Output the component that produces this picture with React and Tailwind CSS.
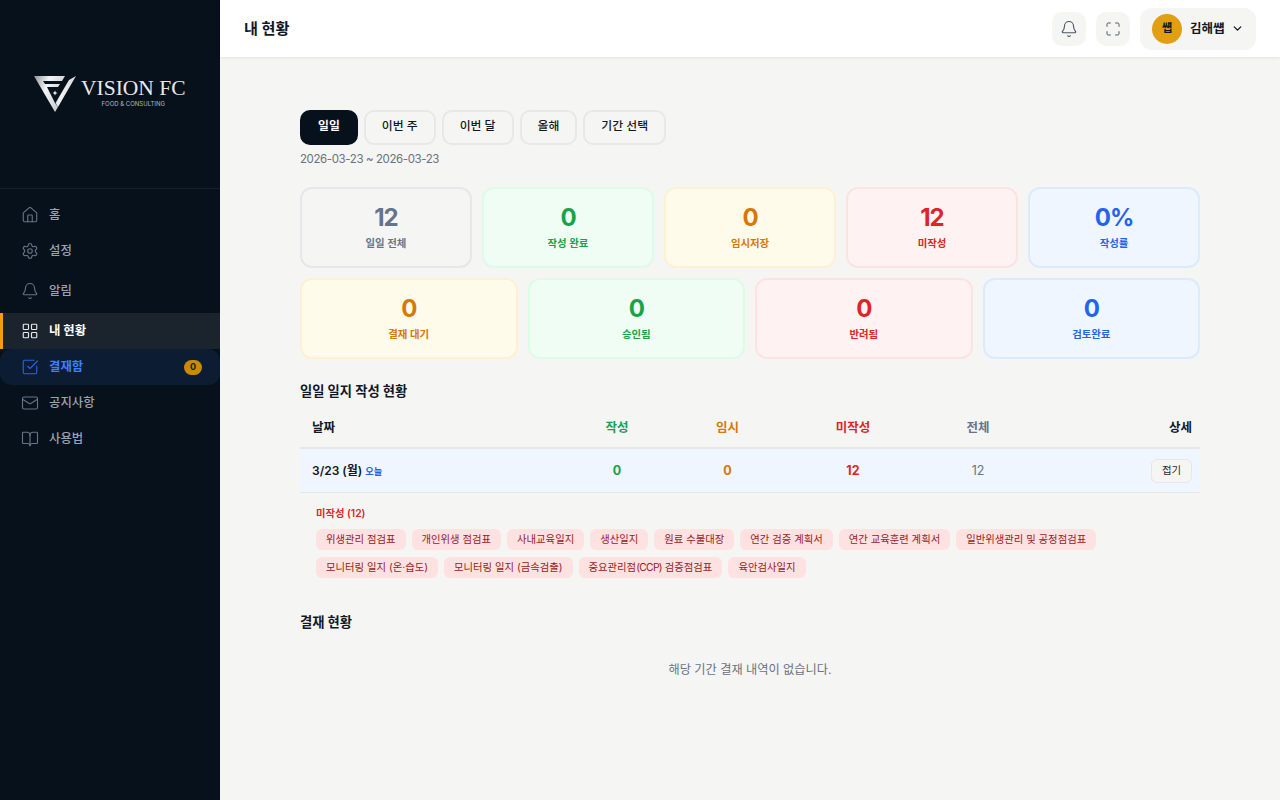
import React from "react";
import { Home, Settings, Bell, LayoutGrid, SquareCheckBig, Mail, BookOpen, Maximize, ChevronDown } from "lucide-react";

const FONT = "font-['Inter','Noto_Sans_CJK_KR',sans-serif]";

function Logo() {
  return (
    <div className="flex items-start">
      <svg width="42" height="38" viewBox="0 0 42 38">
        <defs>
          <linearGradient id="lg" x1="0" y1="0" x2="1" y2="0.4">
            <stop offset="0" stopColor="#8f9296" />
            <stop offset="0.45" stopColor="#f4f4f4" />
            <stop offset="1" stopColor="#c9cbce" />
          </linearGradient>
        </defs>
        <path d="M0 1H31L28 6H9L11 9H26L24 12H13L21 28L24 32L21 37Z" fill="url(#lg)" />
        <path d="M42 1L24 32L21.5 28L35 5Z" fill="url(#lg)" />
        <path d="M21 15.5l.8 1.7 1.7.8-1.7.8-.8 1.7-.8-1.7-1.7-.8 1.7-.8z" fill="#e8e8e8" />
      </svg>
      <div className="ml-[5px] flex flex-col items-center">
        <span className="font-['Liberation_Serif',serif] text-[21.5px] leading-[26px] text-[#e8e8e8] whitespace-nowrap">VISION FC</span>
        <span className="text-[6px] leading-[8px] mt-[-1px] text-[#b5b8bb] whitespace-nowrap">FOOD &amp; CONSULTING</span>
      </div>
    </div>
  );
}

const navStyles = {
  normal: { row: "pl-[21px] text-[#9ca3af] font-medium", icon: "text-[#6b7280]" },
  active: { row: "pl-[18px] border-l-[3px] border-[#f59e0b] bg-[#1b242d] text-white font-bold", icon: "text-[#e5e7eb]" },
  blue: { row: "pl-[21px] rounded-xl bg-[#0c1c33] text-[#3b82f6] font-bold", icon: "text-[#2563eb]" },
};

function NavItem({ icon: Icon, label, cls = "h-9", state = "normal", badge }) {
  const s = navStyles[state];
  return (
    <div className={`flex items-center pr-[18px] gap-[10px] text-[12.4px] ${cls} ${s.row}`}>
      <Icon size={18} strokeWidth={1.5} className={s.icon} />
      <span className="flex-1">{label}</span>
      {badge !== undefined && (
        <span className="h-[15px] w-[18px] rounded-full bg-[#ca8a04] text-[#111827] text-[9px] font-bold flex items-center justify-center">{badge}</span>
      )}
    </div>
  );
}

function Sidebar() {
  return (
    <aside className="w-[220px] h-[800px] shrink-0 bg-[#06111c] flex flex-col">
      <div className="h-[189px] border-b border-[#151f2a] pt-[75px] pl-[34px] box-border">
        <Logo />
      </div>
      <nav className="pt-[8px] flex flex-col">
        <NavItem icon={Home} label="홈" />
        <NavItem icon={Settings} label="설정" />
        <NavItem icon={Bell} label="알림" cls="h-[44px]" />
        <NavItem icon={LayoutGrid} label="내 현황" state="active" />
        <NavItem icon={SquareCheckBig} label="결재함" state="blue" badge={0} />
        <NavItem icon={Mail} label="공지사항" />
        <NavItem icon={BookOpen} label="사용법" />
      </nav>
    </aside>
  );
}

function Header() {
  return (
    <header className="h-[57px] shrink-0 bg-white shadow-[0_1px_3px_rgba(0,0,0,0.08)] flex items-center pl-6 pr-6 relative z-10">
      <h1 className="text-[15.2px] font-bold text-[#111827] flex-1 pt-[2px]">내 현황</h1>
      <div className="flex items-center gap-[10px]">
        <button className="w-[34px] h-[34px] rounded-[10px] bg-[#f5f5f4] flex items-center justify-center text-[#4b5563]">
          <Bell size={18} strokeWidth={1.5} />
        </button>
        <button className="w-[34px] h-[34px] rounded-[10px] bg-[#f5f5f4] flex items-center justify-center text-[#4b5563]">
          <Maximize size={16} strokeWidth={1.5} />
        </button>
        <button className="h-[42px] w-[116px] rounded-xl bg-[#f5f5f4] flex items-center pl-3 gap-2 text-[#111827]">
          <span className="w-[30px] h-[30px] rounded-full bg-[#e39f14] flex items-center justify-center text-[11px] font-bold">썝</span>
          <span className="text-[12.5px] font-semibold pt-px">김해썝</span>
          <ChevronDown size={13} strokeWidth={2.5} className="-ml-[2px]" />
        </button>
      </div>
    </header>
  );
}

const tabs = ["일일", "이번 주", "이번 달", "올해", "기간 선택"];

function Stat({ value, label, tone }) {
  const tones = {
    gray: "bg-[#f5f5f4] border-[#e5e7eb] text-[#64748b]",
    green: "bg-[#f0fdf4] border-[#dcfce7] text-[#16a34a]",
    amber: "bg-[#fffbeb] border-[#fef0d2] text-[#d97706]",
    red: "bg-[#fef2f2] border-[#fee2e2] text-[#dc2626]",
    blue: "bg-[#eff6ff] border-[#dbeafe] text-[#2563eb]",
  };
  return (
    <div className={`h-[81px] rounded-xl border-2 flex flex-col items-center pt-[14px] ${tones[tone]}`}>
      <div className="text-[24px] leading-[30px] font-bold tracking-[-1px]">{value}</div>
      <div className="text-[10.4px] leading-[14px] font-semibold mt-[4px]">{label}</div>
    </div>
  );
}

const row1 = ["위생관리 점검표", "개인위생 점검표", "사내교육일지", "생산일지", "원료 수불대장", "연간 검증 계획서", "연간 교육훈련 계획서", "일반위생관리 및 공정점검표"];

function Tag({ children }) {
  return <span className="h-[21px] px-[10px] rounded-md bg-[#fee2e2] text-[#991b1b] text-[10.35px] flex items-center whitespace-nowrap">{children}</span>;
}

function Table() {
  return (
    <div className="mt-[6px]">
      <div className="grid grid-cols-[262px_110px_111px_140px_110px_1fr] items-center h-[42px] pt-[3px] border-b-2 border-[#e7e7e5] text-[12.5px] font-semibold">
        <div className="pl-3 text-[#111827]">날짜</div>
        <div className="text-center text-[#16a34a]">작성</div>
        <div className="text-center text-[#d97706]">임시</div>
        <div className="text-center text-[#dc2626]">미작성</div>
        <div className="text-center text-[#64748b]">전체</div>
        <div className="text-right pr-2 text-[#111827]">상세</div>
      </div>
      <div className="grid grid-cols-[262px_110px_111px_140px_110px_1fr] items-center h-[44px] bg-[#eff6ff] border-b border-[#e7e7e5] text-[12.5px]">
        <div className="pl-3 pt-px text-xs font-semibold text-[#111827]">3/23 (월) <span className="text-[9.2px] text-[#2563eb] font-semibold">오늘</span></div>
        <div className="text-center pt-px font-bold text-[#16a34a]">0</div>
        <div className="text-center pt-px font-bold text-[#d97706]">0</div>
        <div className="text-center pt-px font-bold text-[#dc2626]">12</div>
        <div className="text-center pt-px text-[#64748b]">12</div>
        <div className="flex justify-end pr-2">
          <button className="h-6 w-[41px] rounded-md bg-[#f5f5f4] border border-[#e7e7e5] text-[10.4px] text-[#1f2937]">접기</button>
        </div>
      </div>
      <div className="pl-4 pt-[13px]">
        <div className="text-[10.3px] leading-[15px] font-semibold text-[#dc2626]">미작성 (12)</div>
        <div className="flex gap-[6px] mt-[8px]">{row1.map((t) => <Tag key={t}>{t}</Tag>)}</div>
        <div className="flex gap-[6px] mt-[7px]">
          <Tag>모니터링 일지 (온·습도)</Tag>
          <Tag>모니터링 일지 (금속검출)</Tag>
          <Tag>중요관리점<span className="tracking-[-0.7px]">(CCP)</span>&nbsp;검증점검표</Tag>
          <Tag>육안검사일지</Tag>
        </div>
      </div>
    </div>
  );
}

export default function App() {
  return (
    <div className={`flex w-[1280px] h-[800px] overflow-hidden ${FONT}`}>
      <Sidebar />
      <div className="flex-1 flex flex-col min-w-0 bg-white">
        <Header />
        <main className="flex-1 bg-[#f5f5f4] px-[80px] pt-[53px]">
          <div className="flex gap-[6px]">
            {tabs.map((t, i) => (
              <button
                key={t}
                className={`h-[35px] px-[16px] pb-[2px] rounded-[10px] border-2 text-[11.85px] ${i === 0 ? "bg-[#06111c] border-[#06111c] text-white font-bold" : "bg-[#f5f5f4] border-[#e8e8e6] text-[#111827] font-medium"}`}
              >
                {t}
              </button>
            ))}
          </div>
          <div className="mt-[6px] text-[11.5px] tracking-[-0.4px] leading-[17px] text-[#6b7280]">2026-03-23 ~ 2026-03-23</div>
          <div className="grid grid-cols-5 gap-[10px] mt-[19px]">
            <Stat value="12" label="일일 전체" tone="gray" />
            <Stat value="0" label="작성 완료" tone="green" />
            <Stat value="0" label="임시저장" tone="amber" />
            <Stat value="12" label="미작성" tone="red" />
            <Stat value="0%" label="작성률" tone="blue" />
          </div>
          <div className="grid grid-cols-4 gap-[10px] mt-[10px]">
            <Stat value="0" label="결재 대기" tone="amber" />
            <Stat value="0" label="승인됨" tone="green" />
            <Stat value="0" label="반려됨" tone="red" />
            <Stat value="0" label="검토완료" tone="blue" />
          </div>
          <h2 className="mt-[22px] text-[13.3px] leading-5 font-bold text-[#111827]">일일 일지 작성 현황</h2>
          <Table />
          <h2 className="mt-[34px] text-[13.3px] leading-5 font-bold text-[#111827]">결재 현황</h2>
          <p className="mt-[30px] text-center text-[12.2px] leading-4 text-[#6b7280]">해당 기간 결재 내역이 없습니다.</p>
        </main>
      </div>
    </div>
  );
}
